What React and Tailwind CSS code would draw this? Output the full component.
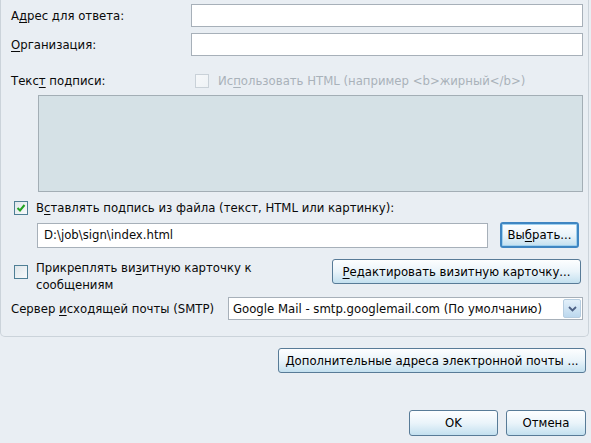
import React from "react";

const font = { fontFamily: '"DejaVu Sans Condensed", "DejaVu Sans", Tahoma, sans-serif' };

function Key({ children }) {
    return <span className="underline underline-offset-2">{children}</span>;
}

function Box({ checked, disabled }) {
    return (
        <span
            className={`flex w-[14px] h-[14px] shrink-0 items-center justify-center border bg-gradient-to-br ${disabled ? "border-[#c9d1d8] from-[#f6f8fa] to-[#eef2f5]" : "border-[#4f7f95] from-[#dfe6ea] to-[#f8fafb]"}`}
        >
            {checked && (
                <svg width="10" height="10" viewBox="0 0 10 10">
                    <path d="M1.5 5 L4 7.5 L8.5 2" fill="none" stroke="#23a323" strokeWidth="2" />
                </svg>
            )}
        </span>
    );
}

function Button({ className = "", focused, children }) {
    return (
        <button
            type="button"
            className={`flex items-center justify-center rounded-[3px] bg-gradient-to-b from-[#fdfeff] via-[#eaf4fa] to-[#c3e0ef] text-black ${focused ? "border-2 border-[#3f86c2] shadow-[inset_0_0_0_1px_#9fd0ee]" : "border border-[#587b97]"} ${className}`}
        >
            {children}
        </button>
    );
}

function Field({ className = "", children }) {
    return (
        <div className={`flex items-center border border-[#a7b0b9] bg-white px-[6px] ${className}`}>
            {children}
        </div>
    );
}

export default function App() {
    return (
        <div style={font} className="w-[591px] h-[443px] overflow-hidden bg-[#e9eef3] text-[13px] leading-[16px] text-[#0a0a0a]">

            {/* GROUP BOX */}
            <div className="w-[589px] h-[337px] border border-t-0 border-[#cbd3da] rounded-b-[5px] pt-[4px]">
                <div className="flex items-center h-[23px]">
                    <div className="w-[190px] pl-[10px]">А<Key>д</Key>рес для ответа:</div>
                    <Field className="w-[392px] h-[23px]" />
                </div>
                <div className="flex items-center h-[23px] mt-[6px]">
                    <div className="w-[190px] pl-[10px]"><Key>О</Key>рганизация:</div>
                    <Field className="w-[392px] h-[23px]" />
                </div>

                <div className="flex items-center h-[15px] mt-[17px]">
                    <div className="w-[194px] pl-[10px]">Текс<Key>т</Key> подписи:</div>
                    <Box disabled />
                    <span className="ml-[9px] text-[#a9b2ba]">Ис<Key>п</Key>ользовать HTML (например &lt;b&gt;жирный&lt;/b&gt;)</span>
                </div>

                <div className="ml-[37px] mt-[7px] w-[545px] h-[97px] border border-[#a3aeb5] bg-[#d5e1e6]" />

                <div className="flex items-center h-[15px] mt-[8px] pl-[13px]">
                    <Box checked />
                    <span className="ml-[8px]">В<Key>с</Key>тавлять подпись из файла (текст, HTML или картинку):</span>
                </div>

                <div className="flex items-center mt-[7px] pl-[36px]">
                    <Field className="w-[451px] h-[25px]">D:\job\sign\index.html</Field>
                    <Button focused className="ml-[12px] w-[79px] h-[26px]">Вы<Key>б</Key>рать...</Button>
                </div>

                <div className="flex items-start mt-[11px] pl-[13px]">
                    <div className="mt-[6px]"><Box /></div>
                    <div className="ml-[8px] w-[262px] leading-[17px]">
                        <div>Прикреплять ви<Key>з</Key>итную карточку к</div>
                        <div>сообщениям</div>
                    </div>
                    <Button className="ml-[34px] w-[249px] h-[25px]"><Key>Р</Key>едактировать визитную карточку...</Button>
                </div>

                <div className="flex items-center mt-[4px]">
                    <div className="w-[227px] pl-[10px]">Сервер <Key>и</Key>сходящей почты (SMTP)</div>
                    <div className="flex items-center w-[355px] h-[23px] border border-[#a7b0b9] bg-white">
                        <span className="flex-1 pl-[4px]">Google Mail - smtp.googlemail.com (По умолчанию)</span>
                        <span className="flex items-center justify-center w-[18px] h-[19px] mr-[1px] rounded-[2px] border border-[#b6cde0] bg-gradient-to-b from-[#e3f0fa] to-[#bcd8ee]">
                            <svg width="9" height="6" viewBox="0 0 9 6">
                                <path d="M1 1 L4.5 4.5 L8 1" fill="none" stroke="#4d6185" strokeWidth="1.8" />
                            </svg>
                        </span>
                    </div>
                </div>
            </div>

            {/* BOTTOM BUTTONS */}
            <div className="flex justify-end pr-[5px] mt-[11px]">
                <Button className="w-[308px] h-[25px]"><Key>Д</Key>ополнительные адреса электронной почты ...</Button>
            </div>
            <div className="flex justify-end gap-[8px] pr-[5px] mt-[37px]">
                <Button className="w-[89px] h-[26px]">OK</Button>
                <Button className="w-[80px] h-[26px]">Отмена</Button>
            </div>
        </div>
    );
}
